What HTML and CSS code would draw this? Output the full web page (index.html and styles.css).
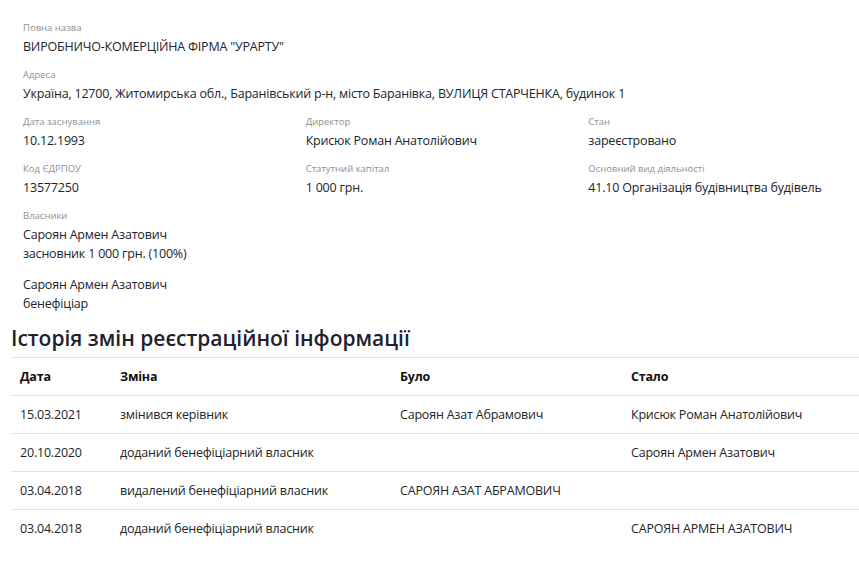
FILE: index.html
```html
<!DOCTYPE html>
<html lang="uk">
<head>
<meta charset="utf-8">
<title>УРАРТУ</title>
<link rel="stylesheet" href="styles.css">
</head>
<body>
<div class="page">
  <div class="info">
    <div class="field full">
      <div class="label">Повна назва</div>
      <div class="value">ВИРОБНИЧО-КОМЕРЦІЙНА ФІРМА "УРАРТУ"</div>
    </div>
    <div class="field full">
      <div class="label">Адреса</div>
      <div class="value">Україна, 12700, Житомирська обл., Баранівський р-н, місто Баранівка, ВУЛИЦЯ СТАРЧЕНКА, будинок 1</div>
    </div>
    <div class="field">
      <div class="label">Дата заснування</div>
      <div class="value">10.12.1993</div>
    </div>
    <div class="field">
      <div class="label">Директор</div>
      <div class="value">Крисюк Роман Анатолійович</div>
    </div>
    <div class="field">
      <div class="label">Стан</div>
      <div class="value">зареєстровано</div>
    </div>
    <div class="field">
      <div class="label">Код ЄДРПОУ</div>
      <div class="value">13577250</div>
    </div>
    <div class="field">
      <div class="label">Статутний капітал</div>
      <div class="value">1 000 грн.</div>
    </div>
    <div class="field">
      <div class="label">Основний вид діяльності</div>
      <div class="value">41.10 Організація будівництва будівель</div>
    </div>
    <div class="field full">
      <div class="label">Власники</div>
      <div class="owner">
        <div class="value">Сароян Армен Азатович</div>
        <div class="value">засновник 1 000 грн. (100%)</div>
      </div>
      <div class="owner">
        <div class="value">Сароян Армен Азатович</div>
        <div class="value">бенефіціар</div>
      </div>
    </div>
  </div>
  <h3 class="title">Історія змін реєстраційної інформації</h3>
  <table class="history">
    <colgroup>
      <col class="c-date"><col class="c-change"><col class="c-was"><col class="c-now">
    </colgroup>
    <thead>
      <tr><th>Дата</th><th>Зміна</th><th>Було</th><th>Стало</th></tr>
    </thead>
    <tbody>
      <tr><td>15.03.2021</td><td>змінився керівник</td><td>Сароян Азат Абрамович</td><td>Крисюк Роман Анатолійович</td></tr>
      <tr><td>20.10.2020</td><td>доданий бенефіціарний власник</td><td></td><td>Сароян Армен Азатович</td></tr>
      <tr><td>03.04.2018</td><td>видалений бенефіціарний власник</td><td>САРОЯН АЗАТ АБРАМОВИЧ</td><td></td></tr>
      <tr><td>03.04.2018</td><td>доданий бенефіціарний власник</td><td></td><td>САРОЯН АРМЕН АЗАТОВИЧ</td></tr>
    </tbody>
  </table>
</div>
</body>
</html>
```

FILE: styles.css
```css
html, body {
  margin: 0;
  padding: 0;
  background: #fff;
}
body {
  font-family: "Open Sans", "Noto Sans", sans-serif;
  font-size: 12.5px;
  letter-spacing: -0.2px;
  color: #212529;
}
.page {
  width: 848px;
  padding-left: 11px;
}
.info {
  display: grid;
  grid-template-columns: repeat(3, 1fr);
  column-gap: 24px;
  padding: 20px 12px 0;
}
.field {
  margin-bottom: 11px;
}
.field.full {
  grid-column: 1 / -1;
}
.label {
  font-size: 9.5px;
  letter-spacing: 0;
  line-height: 16px;
  color: #8f8f8f;
  margin-bottom: 1px;
}
.value {
  line-height: 19px;
}
.owner + .owner {
  margin-top: 12px;
}
.title {
  margin: 0 0 5px;
  font-size: 21px;
  letter-spacing: 0;
  line-height: 28px;
  font-weight: 600;
  color: #1d2130;
}
.history {
  width: 848px;
  border-collapse: collapse;
  table-layout: fixed;
}
.c-date { width: 100px; }
.c-change { width: 280px; }
.c-was { width: 231px; }
.c-now { width: 237px; }
.history th,
.history td {
  text-align: left;
  padding: 9px;
  line-height: 19px;
  border-top: 1px solid #dee2e6;
  vertical-align: middle;
  white-space: nowrap;
}
.history th {
  font-weight: 700;
  color: #111;
}
```
